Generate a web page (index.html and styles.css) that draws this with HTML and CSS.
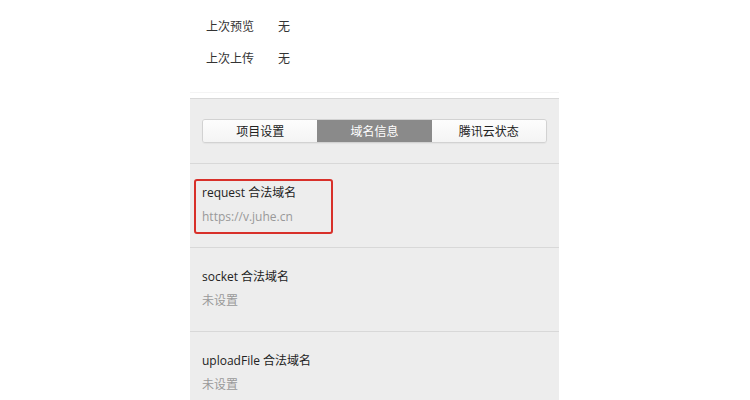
FILE: index.html
```html
<!DOCTYPE html>
<html lang="zh">
<head>
<meta charset="utf-8">
<link rel="stylesheet" href="styles.css">
</head>
<body>
<div class="wrap">
  <div class="info">
    <div class="info-row"><span class="label">本地目录</span><span class="value">demo</span></div>
    <div class="info-row"><span class="label">上次预览</span><span class="value">无</span></div>
    <div class="info-row"><span class="label">上次上传</span><span class="value">无</span></div>
  </div>
  <div class="panel">
    <div class="tabbar">
      <div class="tabs">
        <div class="tab">项目设置</div>
        <div class="tab active">域名信息</div>
        <div class="tab">腾讯云状态</div>
      </div>
    </div>
    <div class="section">
      <div class="field highlight">
        <div class="title">request 合法域名</div>
        <div class="sub">https://v.juhe.cn</div>
      </div>
    </div>
    <div class="section">
      <div class="field">
        <div class="title">socket 合法域名</div>
        <div class="sub">未设置</div>
      </div>
    </div>
    <div class="section">
      <div class="field">
        <div class="title">uploadFile 合法域名</div>
        <div class="sub">未设置</div>
      </div>
    </div>
  </div>
</div>
</body>
</html>
```

FILE: styles.css
```css
html, body {
  margin: 0;
  padding: 0;
  background: #ffffff;
  height: 400px;
  overflow: hidden;
}
body {
  font-family: "Open Sans", "Noto Sans CJK SC", sans-serif;
  font-size: 12px;
  color: #333333;
}
.wrap {
  width: 369px;
  margin-left: 190px;
}
.info {
  margin-top: -22px;
  padding: 0 8px 0 16px;
  height: 115px;
  box-sizing: border-box;
  border-bottom: 1px solid #f4f4f4;
  margin-bottom: 5px;
}
.info-row {
  display: flex;
  height: 32px;
  align-items: center;
}
.label {
  width: 72px;
}
.panel {
  background: #ededed;
  border-top: 1px solid #d8d8d8;
  height: 310px;
}
.tabbar {
  padding: 20px 12px 20px 12px;
  border-bottom: 1px solid #d8d8d8;
}
.tabs {
  display: flex;
  height: 24px;
  border: 1px solid #d2d2d2;
  border-radius: 3px;
  box-sizing: border-box;
  overflow: hidden;
  box-shadow: 0 1px 1px rgba(0,0,0,0.04);
}
.tab {
  flex: 1;
  display: flex;
  align-items: center;
  justify-content: center;
  background: linear-gradient(#fdfdfd, #f4f4f4);
  color: #222222;
  font-size: 12px;
}
.tab.active {
  background: #8a8a8a;
  color: #ffffff;
}
.section {
  height: 84px;
  box-sizing: border-box;
  border-bottom: 1px solid #d8d8d8;
  padding: 15px 0 0 4px;
}
.field {
  display: inline-block;
  padding: 3px 6px 6px 6px;
  border: 2px solid transparent;
  width: 139px;
  box-sizing: border-box;
}
.field.highlight {
  border-color: #d8302a;
  border-radius: 3px;
}
.title {
  line-height: 18px;
  color: #222222;
}
.sub {
  line-height: 18px;
  margin-top: 6px;
  color: #999999;
}
```
